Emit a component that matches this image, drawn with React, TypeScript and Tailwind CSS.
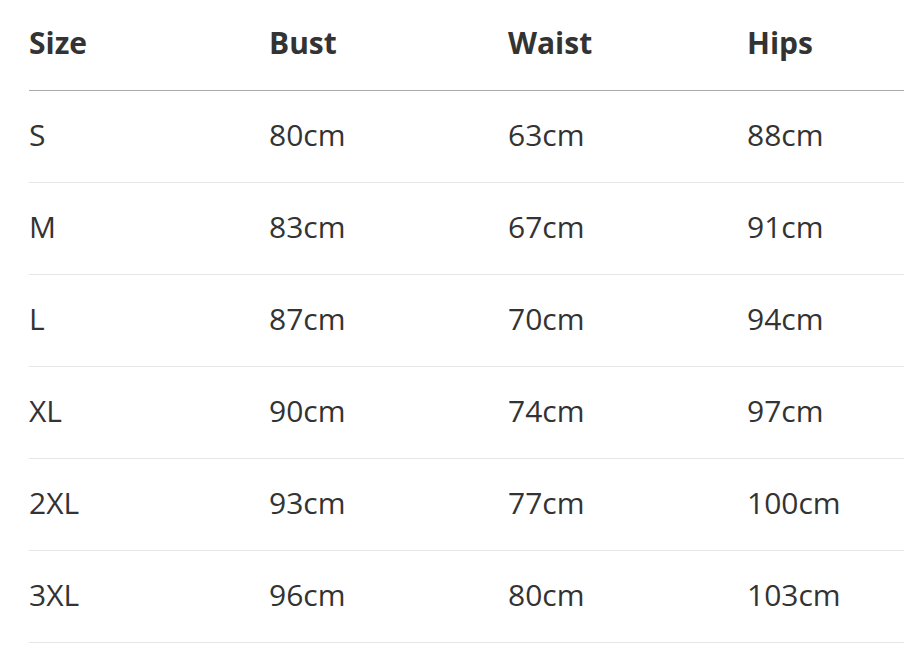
import React from 'react'

const rows = [
  ['S', '80cm', '63cm', '88cm'],
  ['M', '83cm', '67cm', '91cm'],
  ['L', '87cm', '70cm', '94cm'],
  ['XL', '90cm', '74cm', '97cm'],
  ['2XL', '93cm', '77cm', '100cm'],
  ['3XL', '96cm', '80cm', '103cm'],
]

export default function App() {
  return (
    <div
      className="w-[904px] h-[658px] overflow-hidden bg-white pl-[29px] text-[#333]"
      style={{ fontFamily: '"Open Sans", "Noto Sans", sans-serif' }}
    >
      <div className="w-[960px]">
        <div className="grid grid-cols-[240px_239px_239px_242px] h-[91px] items-center border-b border-[#aaaaaa] text-[30px] font-bold pb-[6px]">
          <div>Size</div>
          <div>Bust</div>
          <div>Waist</div>
          <div>Hips</div>
        </div>
        {rows.map((r) => (
          <div
            key={r[0]}
            className="grid grid-cols-[240px_239px_239px_242px] h-[92px] items-center border-b border-[#e6e6e6] text-[30px] pb-[4px]"
          >
            {r.map((c, i) => (
              <div key={i}>{c}</div>
            ))}
          </div>
        ))}
      </div>
    </div>
  )
}
